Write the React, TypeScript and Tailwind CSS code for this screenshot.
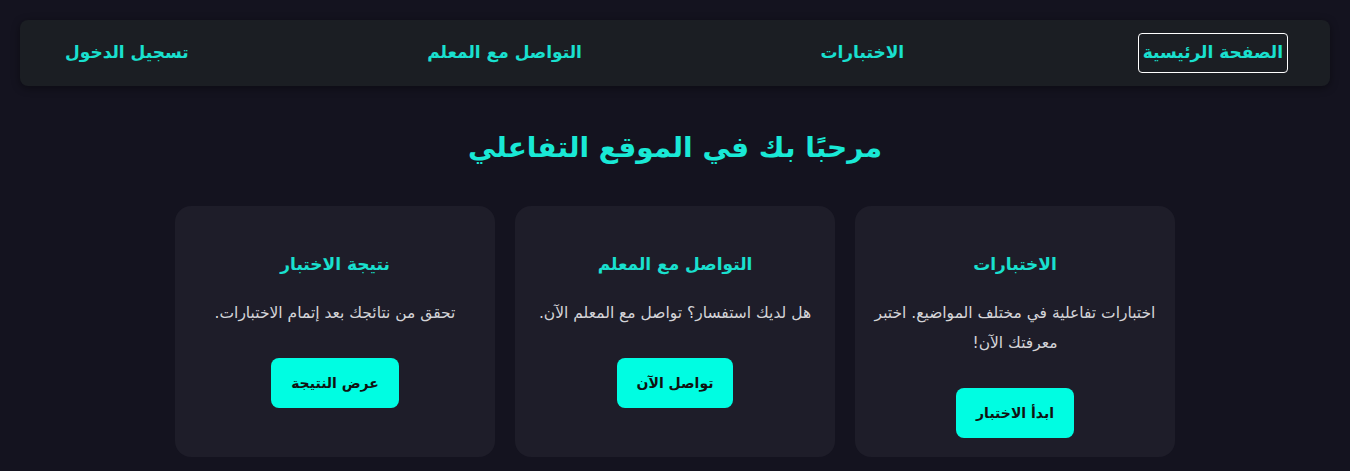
import React from "react";

const cards = [
  {
    title: "الاختبارات",
    desc: "اختبارات تفاعلية في مختلف المواضيع. اختبر معرفتك الآن!",
    btn: "ابدأ الاختبار",
  },
  {
    title: "التواصل مع المعلم",
    desc: "هل لديك استفسار؟ تواصل مع المعلم الآن.",
    btn: "تواصل الآن",
  },
  {
    title: "نتيجة الاختبار",
    desc: "تحقق من نتائجك بعد إتمام الاختبارات.",
    btn: "عرض النتيجة",
  },
];

export default function App() {
  return (
    <div
      dir="rtl"
      className="min-h-[471px] w-full bg-[#14131f] pt-[20px] px-[20px]"
      style={{ fontFamily: '"DejaVu Sans", sans-serif' }}
    >
      <nav className="flex h-[66px] items-center justify-between rounded-lg bg-[#1b1e23] pl-[40px] pr-[42px] shadow-[0_2px_8px_rgba(0,0,0,0.4)]">
        <a className="rounded-[4px] border border-white px-[4px] py-[6px] text-[17px] font-bold text-[#19e0cf]">
          الصفحة الرئيسية
        </a>
        <a className="border border-transparent px-[4px] py-[6px] text-[17px] font-bold text-[#19e0cf]">
          الاختبارات
        </a>
        <a className="border border-transparent px-[4px] py-[6px] text-[17px] font-bold text-[#19e0cf]">
          التواصل مع المعلم
        </a>
        <a className="border border-transparent px-[4px] py-[6px] text-[17px] font-bold text-[#19e0cf]">
          تسجيل الدخول
        </a>
      </nav>
      <h1 className="mt-[40px] text-center text-[28px] font-bold leading-[44px] text-[#19e9d6]">
        مرحبًا بك في الموقع التفاعلي
      </h1>
      <div className="mt-[36px] flex justify-center gap-[20px]">
        {cards.map((c) => (
          <div
            key={c.title}
            className="flex h-[251px] w-[320px] flex-col items-center rounded-2xl bg-[#1e1d29] px-[14px] pt-[44px] text-center"
          >
            <h3 className="text-[17px] font-bold leading-[28px] text-[#19e0cf]">{c.title}</h3>
            <p className="mt-[20px] text-[15.5px] leading-[30px] text-[#d4d4d8]">{c.desc}</p>
            <button className="mt-[30px] h-[50px] rounded-lg bg-[#00fde2] px-[20px] text-[14px] font-bold text-[#111]">
              {c.btn}
            </button>
          </div>
        ))}
      </div>
    </div>
  );
}
